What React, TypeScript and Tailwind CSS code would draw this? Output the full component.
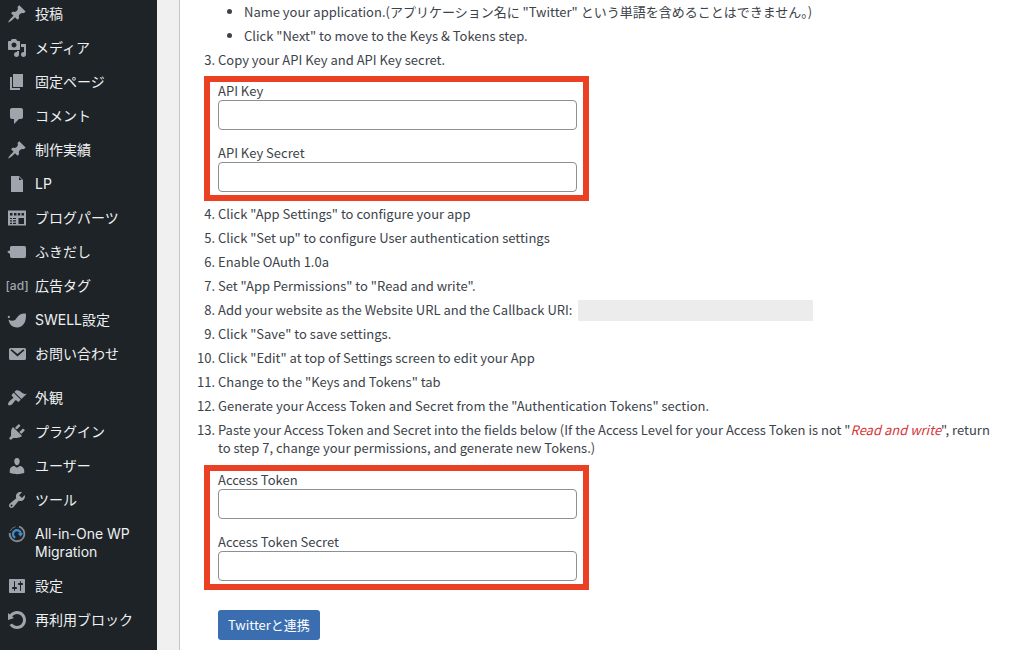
import type { ReactNode } from "react";

const paths = {
  pin: "M10.44 3.02l1.82-1.82 6.36 6.35-1.83 1.82c-1.05-.68-2.48-.57-3.41.36l-.75.75c-.92.93-1.04 2.35-.35 3.41l-1.83 1.82-2.41-2.41-2.8 2.79c-.42.42-3.38 2.71-3.8 2.29s1.86-3.39 2.28-3.81l2.79-2.79L4.1 9.36l1.83-1.82c1.05.69 2.48.57 3.4-.36l.75-.75c.93-.92 1.05-2.35.36-3.41z",
  media: "M13 11V4c0-.55-.45-1-1-1h-1.67L9 1H5L3.67 3H2c-.55 0-1 .45-1 1v7c0 .55.45 1 1 1h10c.55 0 1-.45 1-1zM7 4.5c1.38 0 2.5 1.12 2.5 2.5S8.38 9.5 7 9.5 4.5 8.38 4.5 7 5.62 4.5 7 4.5zM14 6h5v10.5c0 1.38-1.12 2.5-2.5 2.5S14 17.88 14 16.5s1.12-2.5 2.5-2.5c.17 0 .34.02.5.05V9h-3V6zm-4 8.05V13h2v3.5c0 1.38-1.12 2.5-2.5 2.5S7 17.88 7 16.5 8.12 14 9.5 14c.17 0 .34.02.5.05z",
  page: "M6 15V2h10v13H6zm-1 1h8v2H3V5h2v11z",
  comment: "M5 2h9c1.1 0 2 .9 2 2v7c0 1.1-.9 2-2 2h-2l-5 5v-5H5c-1.1 0-2-.9-2-2V4c0-1.1.9-2 2-2z",
  file: "M12 2l4 4v12H4V2h8zm0 4h3l-3-3v3z",
  brush: "M14.48 11.06L7.41 3.99l1.5-1.5c.5-.56 2.3-.47 3.51.32 1.21.8 1.43 1.28 2.91 2.1 1.18.64 2.45 1.26 4.45.85zm-.71.71L6.7 4.7 4.93 6.47c-.39.39-.39 1.02 0 1.41l1.06 1.06c.39.39.39 1.03 0 1.42-.6.6-1.43 1.11-2.21 1.69-.35.26-.7.53-1.01.84C1.43 14.23.4 16.08 1.4 17.07c.99 1 2.84-.03 4.18-1.36.31-.31.58-.66.85-1.02.57-.78 1.08-1.61 1.69-2.21.39-.39 1.02-.39 1.41 0l1.06 1.06c.39.39 1.02.39 1.41 0z",
  plug: "M13.11 4.36L9.87 7.6 8 5.73l3.24-3.24c.35-.34 1.05-.2 1.56.32.52.51.66 1.21.31 1.55zm-8 1.77l.91-1.12 9.01 9.01-1.19.84c-.71.71-2.63 1.16-3.82 1.16H6.14L4.9 17.26c-.59.59-1.54.59-2.12 0-.59-.58-.59-1.53 0-2.12l1.24-1.24v-3.88c0-1.13.4-3.19 1.09-3.89zm7.26 3.97l3.24-3.24c.34-.35 1.04-.21 1.55.31.52.51.66 1.21.31 1.55l-3.24 3.25z",
  user: "M10 9.25c-2.27 0-2.73-3.44-2.73-3.44C7 4.02 7.82 2 9.97 2c2.16 0 2.98 2.02 2.71 3.81 0 0-.41 3.44-2.68 3.44zm0 2.57L12.72 10c2.39 0 4.52 2.33 4.52 4.53v2.49s-3.65 1.13-7.24 1.13c-3.65 0-7.24-1.13-7.24-1.13v-2.49c0-2.25 1.94-4.48 4.47-4.48z",
  wrench: "M16.68 9.77c-1.34 1.34-3.3 1.67-4.95.99l-5.41 6.52c-.99.99-2.59.99-3.58 0s-.99-2.59 0-3.57l6.52-5.42c-.68-1.65-.35-3.61.99-4.95 1.28-1.28 3.12-1.62 4.72-1.06l-2.89 2.89 2.82 2.82 2.86-2.87c.53 1.58.18 3.39-1.08 4.65zM3.81 16.21c.4.39 1.04.39 1.43 0 .4-.4.4-1.04 0-1.43-.39-.4-1.03-.4-1.43 0-.39.39-.39 1.03 0 1.43z",
  settings: "M18 16V4c0-.55-.45-1-1-1H3c-.55 0-1 .45-1 1v12c0 .55.45 1 1 1h14c.55 0 1-.45 1-1zM8 11h1c.55 0 1 .45 1 1s-.45 1-1 1H8v1.5c0 .28-.22.5-.5.5s-.5-.22-.5-.5V13H6c-.55 0-1-.45-1-1s.45-1 1-1h1V5.5c0-.28.22-.5.5-.5s.5.22.5.5V11zm5-2h-1c-.55 0-1-.45-1-1s.45-1 1-1h1V5.5c0-.28.22-.5.5-.5s.5.22.5.5V7h1c.55 0 1 .45 1 1s-.45 1-1 1h-1v5.5c0 .28-.22.5-.5.5s-.5-.22-.5-.5V9z",
  rotate: "M10.25 1.02c5.1 0 8.75 4.04 8.75 9s-3.65 9-8.75 9c-3.2 0-6.02-1.59-7.68-3.99l2.59-1.52c1.1 1.5 2.86 2.51 4.84 2.51 3.3 0 6-2.79 6-6s-2.7-6-6-6c-1.97 0-3.72 1-4.82 2.49L7 8.02l-6 2v-7L2.89 4.6c1.69-2.17 4.36-3.58 7.36-3.58z",
  balloon: "M4.500 4h12.800q1.700 0 1.700 1.700v8.600q0 1.700-1.700 1.700H4.700Q3 16 3 14.300V12L.6 10.200Q.4 9.400 1 9L3 8.600V5.700Q3 4 4.500 4z",
  parts: "M1 2.500h18v15H1zM3 5v2.500h2.500V5zM7 5v2.500h2.500V5zM10.800 5v2.500h2.400V5zM14.500 5v2.500H17V5zM3 10v1h2v-1zM6 10v1h3v-1zM3 12.300v1.200h2v-1.200zM6 12.300v1.200h3v-1.200zM3 14.800V16h2v-1.200zM6 14.800V16h3v-1.200zM11.500 10v6h5.500v-6z",
  swell: "M1.800 5.800a1.100 1.100 0 1 0 .1 0zM18.800 3.500C19.800 11 16.500 17.500 10.300 17.500 5.500 17.500 2.200 14.500 1.500 9.500 4.500 11.300 7.700 11.200 9.300 8.500 11.300 5 14 3.200 18.800 3.500z",
  mail: "M3.500 4h14Q19 4 19 5.500v9q0 1.500-1.500 1.500h-14Q2 16 2 14.500v-9Q2 4 3.500 4zM3.500 6.200L10.500 12.400 17.500 6.200 16.300 5.200 10.500 10 4.700 5.200z",
};

function Glyph({ name }: { name: keyof typeof paths }) {
  return (
    <svg viewBox="0 0 20 20" className="size-5 shrink-0" fill="currentColor" fillRule="evenodd" aria-hidden="true">
      <path d={paths[name]} />
    </svg>
  );
}

function MigrationIcon() {
  return (
    <svg viewBox="0 0 20 20" className="size-5 shrink-0" fill="none" aria-hidden="true">
      <path d="M12 2.700A7.400 7.400 0 1 1 2.700 9" stroke="#85898f" strokeWidth="1.900" />
      <path d="M3.200 7.200A7.400 7.400 0 0 1 8.500 2.700" stroke="#6c7076" strokeWidth="1" />
      <path d="M8.200 13.700a4 4 0 1 1 5.700-4" stroke="#3f8fd0" strokeWidth="2.200" />
      <path d="M10.800 9.300h5.400l-2.700 3.500z" fill="#3f8fd0" />
    </svg>
  );
}

function AdIcon() {
  return (
    <span className="flex w-5 shrink-0 justify-center text-xs font-medium whitespace-nowrap" aria-hidden="true">
      [ad]
    </span>
  );
}

function MenuItem({ icon, children }: { icon: ReactNode; children: ReactNode }) {
  return (
    <li>
      <a href="#" className="flex items-start gap-2 py-2 pr-3 pl-[7px] text-[#a0a5ad]">
        <span className="flex h-[18px] items-center">{icon}</span>
        <span className="text-sm leading-[18px] text-[#eef0f1]">{children}</span>
      </a>
    </li>
  );
}

function Field({ id, label }: { id: string; label: string }) {
  return (
    <div>
      <label htmlFor={id} className="block">{label}</label>
      <input id={id} type="text" className="block h-[30px] w-full rounded-[4px] border border-[#8c8f94] bg-white px-2 outline-none" />
    </div>
  );
}

function Highlight({ children }: { children: ReactNode }) {
  return (
    <div className="-ml-[14px] flex w-[385px] max-w-full flex-col gap-[14px] border-[6px] border-[#ec4024] pr-[6px] pb-[3px] pl-2">
      {children}
    </div>
  );
}

export default function App() {
  return (
    <div className="flex h-screen overflow-hidden bg-[#f0f0f1] font-['Inter','Noto_Sans_CJK_JP',sans-serif]">
      <nav className="w-[157px] shrink-0 bg-[#1d2327]">
        <ul className="-mt-[3px]">
          <MenuItem icon={<Glyph name="pin" />}>投稿</MenuItem>
          <MenuItem icon={<Glyph name="media" />}>メディア</MenuItem>
          <MenuItem icon={<Glyph name="page" />}>固定ページ</MenuItem>
          <MenuItem icon={<Glyph name="comment" />}>コメント</MenuItem>
          <MenuItem icon={<Glyph name="pin" />}>制作実績</MenuItem>
          <MenuItem icon={<Glyph name="file" />}>LP</MenuItem>
          <MenuItem icon={<Glyph name="parts" />}>ブログパーツ</MenuItem>
          <MenuItem icon={<Glyph name="balloon" />}>ふきだし</MenuItem>
          <MenuItem icon={<AdIcon />}>広告タグ</MenuItem>
          <MenuItem icon={<Glyph name="swell" />}>SWELL設定</MenuItem>
          <MenuItem icon={<Glyph name="mail" />}>お問い合わせ</MenuItem>
        </ul>
        <ul className="mt-[10px]">
          <MenuItem icon={<Glyph name="brush" />}>外観</MenuItem>
          <MenuItem icon={<Glyph name="plug" />}>プラグイン</MenuItem>
          <MenuItem icon={<Glyph name="user" />}>ユーザー</MenuItem>
          <MenuItem icon={<Glyph name="wrench" />}>ツール</MenuItem>
          <MenuItem icon={<MigrationIcon />}>All-in-One WP Migration</MenuItem>
          <MenuItem icon={<Glyph name="settings" />}>設定</MenuItem>
          <MenuItem icon={<Glyph name="rotate" />}>再利用ブロック</MenuItem>
        </ul>
      </nav>
      <main className="ml-[22px] flex-1 border-l border-[#c3c4c7] bg-white pr-[22px] pl-[38px] font-['Noto_Sans_CJK_JP',sans-serif] text-[13px] leading-[18px] text-[#3c434a]">
        <ol start={3} className="list-decimal">
          <li className="list-none">
            <ul className="flex list-disc flex-col gap-[6px] pt-[3px] pl-[26px]">
              <li>Name your application.(アプリケーション名に "Twitter" という単語を含めることはできません。)</li>
              <li>Click "Next" to move to the Keys &amp; Tokens step.</li>
            </ul>
          </li>
          <li value={3} className="mt-[6px]">
            Copy your API Key and API Key secret.
            <div className="mt-[7px]">
              <Highlight>
                <Field id="api-key" label="API Key" />
                <Field id="api-key-secret" label="API Key Secret" />
              </Highlight>
            </div>
          </li>
          <li className="mt-[4px]">Click "App Settings" to configure your app</li>
          <li className="mt-[6px]">Click "Set up" to configure User authentication settings</li>
          <li className="mt-[6px]">Enable OAuth 1.0a</li>
          <li className="mt-[6px]">Set "App Permissions" to "Read and write".</li>
          <li className="mt-[6px]">
            <div className="flex h-[18px] items-center gap-[6px]">
              <span>Add your website as the Website URL and the Callback URI:</span>
              <span className="h-[21px] w-[235px] bg-[#ececec]" />
            </div>
          </li>
          <li className="mt-[6px]">Click "Save" to save settings.</li>
          <li className="mt-[6px]">Click "Edit" at top of Settings screen to edit your App</li>
          <li className="mt-[6px]">Change to the "Keys and Tokens" tab</li>
          <li className="mt-[6px]">Generate your Access Token and Secret from the "Authentication Tokens" section.</li>
          <li className="mt-[6px]">
            Paste your Access Token and Secret into the fields below (If the Access Level for your Access Token is not "
            <em className="text-[#d63638]">Read and write</em>", return to step 7, change your permissions, and generate new Tokens.)
            <div className="mt-2">
              <Highlight>
                <Field id="access-token" label="Access Token" />
                <Field id="access-token-secret" label="Access Token Secret" />
              </Highlight>
            </div>
          </li>
        </ol>
        <button type="button" className="mt-5 h-[30px] rounded-[3px] bg-[#3a6eb0] px-[10px] text-white">Twitterと連携</button>
      </main>
    </div>
  );
}
